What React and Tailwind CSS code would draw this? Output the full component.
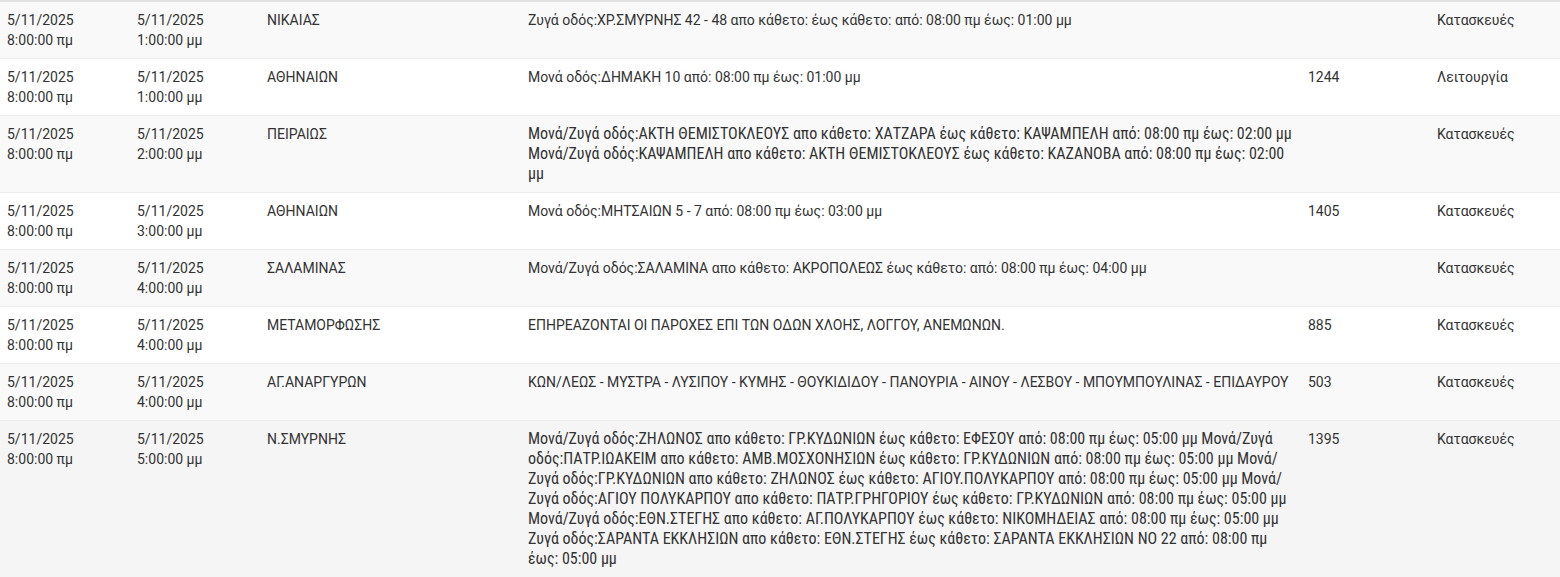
const rows = [
  {
    from: ["5/11/2025", "8:00:00 πμ"],
    to: ["5/11/2025", "1:00:00 μμ"],
    area: "ΝΙΚΑΙΑΣ",
    desc: "Ζυγά οδός:ΧΡ.ΣΜΥΡΝΗΣ 42 - 48 απο κάθετο: έως κάθετο: από: 08:00 πμ έως: 01:00 μμ",
    num: "",
    type: "Κατασκευές",
  },
  {
    from: ["5/11/2025", "8:00:00 πμ"],
    to: ["5/11/2025", "1:00:00 μμ"],
    area: "ΑΘΗΝΑΙΩΝ",
    desc: "Μονά οδός:ΔΗΜΑΚΗ 10 από: 08:00 πμ έως: 01:00 μμ",
    num: "1244",
    type: "Λειτουργία",
  },
  {
    from: ["5/11/2025", "8:00:00 πμ"],
    to: ["5/11/2025", "2:00:00 μμ"],
    area: "ΠΕΙΡΑΙΩΣ",
    desc: "Μονά/Ζυγά οδός:ΑΚΤΗ ΘΕΜΙΣΤΟΚΛΕΟΥΣ απο κάθετο: ΧΑΤΖΑΡΑ έως κάθετο: ΚΑΨΑΜΠΕΛΗ από: 08:00 πμ έως: 02:00 μμ Μονά/Ζυγά οδός:ΚΑΨΑΜΠΕΛΗ απο κάθετο: ΑΚΤΗ ΘΕΜΙΣΤΟΚΛΕΟΥΣ έως κάθετο: ΚΑΖΑΝΟΒΑ από: 08:00 πμ έως: 02:00 μμ",
    condensed: true,
    num: "",
    type: "Κατασκευές",
  },
  {
    from: ["5/11/2025", "8:00:00 πμ"],
    to: ["5/11/2025", "3:00:00 μμ"],
    area: "ΑΘΗΝΑΙΩΝ",
    desc: "Μονά οδός:ΜΗΤΣΑΙΩΝ 5 - 7 από: 08:00 πμ έως: 03:00 μμ",
    num: "1405",
    type: "Κατασκευές",
  },
  {
    from: ["5/11/2025", "8:00:00 πμ"],
    to: ["5/11/2025", "4:00:00 μμ"],
    area: "ΣΑΛΑΜΙΝΑΣ",
    desc: "Μονά/Ζυγά οδός:ΣΑΛΑΜΙΝΑ απο κάθετο: ΑΚΡΟΠΟΛΕΩΣ έως κάθετο: από: 08:00 πμ έως: 04:00 μμ",
    num: "",
    type: "Κατασκευές",
  },
  {
    from: ["5/11/2025", "8:00:00 πμ"],
    to: ["5/11/2025", "4:00:00 μμ"],
    area: "ΜΕΤΑΜΟΡΦΩΣΗΣ",
    desc: "ΕΠΗΡΕΑΖΟΝΤΑΙ ΟΙ ΠΑΡΟΧΕΣ ΕΠΙ ΤΩΝ ΟΔΩΝ ΧΛΟΗΣ, ΛΟΓΓΟΥ, ΑΝΕΜΩΝΩΝ.",
    num: "885",
    type: "Κατασκευές",
  },
  {
    from: ["5/11/2025", "8:00:00 πμ"],
    to: ["5/11/2025", "4:00:00 μμ"],
    area: "ΑΓ.ΑΝΑΡΓΥΡΩΝ",
    desc: "ΚΩΝ/ΛΕΩΣ - ΜΥΣΤΡΑ - ΛΥΣΙΠΟΥ - ΚΥΜΗΣ - ΘΟΥΚΙΔΙΔΟΥ - ΠΑΝΟΥΡΙΑ - ΑΙΝΟΥ - ΛΕΣΒΟΥ - ΜΠΟΥΜΠΟΥΛΙΝΑΣ - ΕΠΙΔΑΥΡΟΥ",
    num: "503",
    type: "Κατασκευές",
  },
  {
    from: ["5/11/2025", "8:00:00 πμ"],
    to: ["5/11/2025", "5:00:00 μμ"],
    area: "Ν.ΣΜΥΡΝΗΣ",
    desc: "Μονά/Ζυγά οδός:ΖΗΛΩΝΟΣ απο κάθετο: ΓΡ.ΚΥΔΩΝΙΩΝ έως κάθετο: ΕΦΕΣΟΥ από: 08:00 πμ έως: 05:00 μμ Μονά/Ζυγά οδός:ΠΑΤΡ.ΙΩΑΚΕΙΜ απο κάθετο: ΑΜΒ.ΜΟΣΧΟΝΗΣΙΩΝ έως κάθετο: ΓΡ.ΚΥΔΩΝΙΩΝ από: 08:00 πμ έως: 05:00 μμ Μονά/Ζυγά οδός:ΓΡ.ΚΥΔΩΝΙΩΝ απο κάθετο: ΖΗΛΩΝΟΣ έως κάθετο: ΑΓΙΟΥ.ΠΟΛΥΚΑΡΠΟΥ από: 08:00 πμ έως: 05:00 μμ Μονά/Ζυγά οδός:ΑΓΙΟΥ ΠΟΛΥΚΑΡΠΟΥ απο κάθετο: ΠΑΤΡ.ΓΡΗΓΟΡΙΟΥ έως κάθετο: ΓΡ.ΚΥΔΩΝΙΩΝ από: 08:00 πμ έως: 05:00 μμ Μονά/Ζυγά οδός:ΕΘΝ.ΣΤΕΓΗΣ απο κάθετο: ΑΓ.ΠΟΛΥΚΑΡΠΟΥ έως κάθετο: ΝΙΚΟΜΗΔΕΙΑΣ από: 08:00 πμ έως: 05:00 μμ Ζυγά οδός:ΣΑΡΑΝΤΑ ΕΚΚΛΗΣΙΩΝ απο κάθετο: ΕΘΝ.ΣΤΕΓΗΣ έως κάθετο: ΣΑΡΑΝΤΑ ΕΚΚΛΗΣΙΩΝ ΝΟ 22 από: 08:00 πμ έως: 05:00 μμ",
    condensed: true,
    num: "1395",
    type: "Κατασκευές",
    hover: true,
  },
];

const Cell = ({ children, className = "" }) => (
  <div className={`px-[7px] py-2 ${className}`}>{children}</div>
);

const App = () => {
  return (
    <div className="w-[1560px] h-[577px] overflow-hidden bg-white font-['Roboto',sans-serif] text-sm leading-5 text-[#333]">
      <div className="border-t-2 border-[#e2e2e2]">
        {rows.map((r, i) => {
          const bg = r.hover ? "bg-[#f5f5f5]" : i % 2 === 0 ? "bg-[#f9f9f9]" : "bg-white";
          return (
            <div
              key={i}
              className={`grid grid-cols-[130px_130px_261px_780px_129px_130px] border-b border-[#ececec] ${bg}`}
            >
              <Cell>
                <div>{r.from[0]}</div>
                <div>{r.from[1]}</div>
              </Cell>
              <Cell>
                <div>{r.to[0]}</div>
                <div>{r.to[1]}</div>
              </Cell>
              <Cell>{r.area}</Cell>
              <Cell className={r.condensed ? "text-base leading-5 [font-stretch:condensed]" : ""}>{r.desc}</Cell>
              <Cell>{r.num}</Cell>
              <Cell>{r.type}</Cell>
            </div>
          );
        })}
      </div>
    </div>
  );
};

export default App;
